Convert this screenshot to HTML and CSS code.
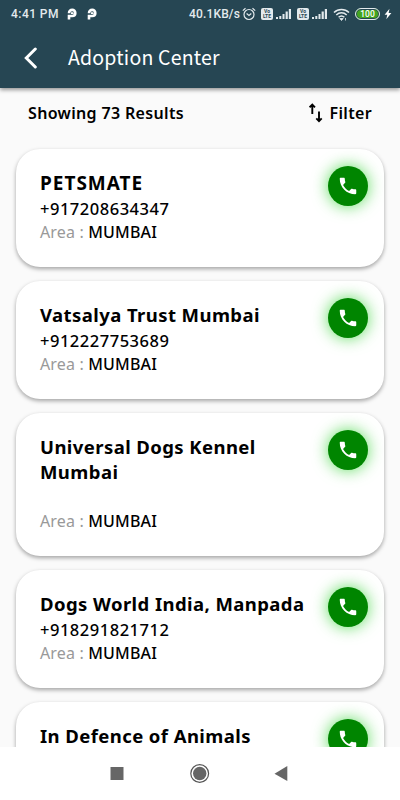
FILE: index.html
```html
<!DOCTYPE html>
<html lang="en">
  <head>
    <meta charset="utf-8" />
    <meta name="viewport" content="width=device-width, initial-scale=1" />
    <title>Adoption Center</title>
    <link rel="stylesheet" href="styles.css">
  </head>
  <body>
    <svg class="sprite" width="0" height="0">
      <symbol id="phone" viewBox="0 0 24 24">
        <path d="M6.620 10.790c1.440 2.830 3.760 5.140 6.590 6.590l2.200-2.200c.27-.27.67-.36 1.020-.24 1.120.37 2.330.57 3.570.57.55 0 1 .45 1 1V20c0 .55-.45 1-1 1-9.390 0-17-7.610-17-17 0-.55.45-1 1-1h3.500c.55 0 1 .45 1 1 0 1.250.2 2.450.57 3.570.11.35.03.74-.25 1.020z" fill="#fff" />
      </symbol>
      <symbol id="pay" viewBox="0 0 10 12">
        <path d="M2 11.600V8H5.200C7 8 8.300 6.700 8.300 4.900S7 1.900 5.200 1.900 2 3 2 5.200M5.200 4.200V6" fill="none" stroke="#fff" stroke-width="2.600" />
      </symbol>
      <symbol id="signal" viewBox="0 0 16 12">
        <path d="M0 11h2V9H0zM3.300 11h2V8h-2zM6.500 11h2V6h-2zM9.600 11h2.200V3.500H9.600zM12.800 11h2.200V1h-2.200z" fill="#e3eaed" />
      </symbol>
    </svg>

    <header class="header">
      <div class="status">
        <span class="time">4:41 PM</span>
        <svg class="pay" width="10" height="12"><use href="#pay" /></svg>
        <svg class="pay" width="10" height="12"><use href="#pay" /></svg>
        <span class="speed">40.1KB/s</span>
        <svg class="alarm" width="14" height="14" viewBox="0 0 14 14" fill="none" stroke="#e3eaed" stroke-width="1.2">
          <circle cx="7" cy="7.500" r="5" />
          <path d="M.8 3.600 3.500 1.200M13.200 3.600 10.500 1.200M4.600 6.500 7 8.500l2.300-2" />
        </svg>
        <span class="volte"><span>Vo</span><span>LTE</span></span>
        <svg class="signal" width="16" height="12"><use href="#signal" /></svg>
        <span class="volte"><span>Vo</span><span>LTE</span></span>
        <svg class="signal" width="16" height="12"><use href="#signal" /></svg>
        <svg class="wifi" width="17" height="13" viewBox="0 0 17 13" fill="none" stroke="#e3eaed" stroke-width="1.500">
          <path d="M1 4.500C5.200.4 11.800.4 16 4.500M3.300 7c3-2.900 7.400-2.900 10.400 0M5.600 9.300c1.700-1.600 4.100-1.600 5.800 0" />
          <path d="M6.800 10.500h3.400l-1.700 2zM12.500 10v2.500" stroke-width=".8" fill="#e3eaed" />
        </svg>
        <span class="battery">100</span>
        <svg class="bolt" width="8" height="12" viewBox="0 0 8 12"><path d="M5.500.8.600 6.800h2.700L2.300 11.300 7.400 5H4.600z" fill="#fff" /></svg>
      </div>
      <div class="titlebar">
        <svg class="back" width="16" height="24" viewBox="0 0 16 24"><path d="M14.300 3 5.300 12l9 9" fill="none" stroke="#fff" stroke-width="3" stroke-linecap="round" /></svg>
        <h1>Adoption Center</h1>
      </div>
    </header>

    <main class="content">
      <div class="toolbar">
        <span class="count">Showing 73 Results</span>
        <div class="filter">
          <svg width="14" height="20" viewBox="0 0 14 20" fill="none" stroke="#000" stroke-width="1.900">
            <path d="M3.300 11V2M.6 4.300 3.300 1.600 6 4.300M10 8.500v9M7.300 15.400l2.700 2.700 2.700-2.700" />
          </svg>
          <span>Filter</span>
        </div>
      </div>

      <div class="list">
        <div class="card">
          <div class="info">
            <h2 class="caps">PETSMATE</h2>
            <p class="number">+917208634347</p>
            <p class="area">Area : <b>MUMBAI</b></p>
          </div>
          <div class="call"><svg width="22" height="22"><use href="#phone" /></svg></div>
        </div>
        <div class="card">
          <div class="info">
            <h2>Vatsalya Trust Mumbai</h2>
            <p class="number">+912227753689</p>
            <p class="area">Area : <b>MUMBAI</b></p>
          </div>
          <div class="call"><svg width="22" height="22"><use href="#phone" /></svg></div>
        </div>
        <div class="card tall">
          <div class="info">
            <h2>Universal Dogs Kennel Mumbai</h2>
            <p class="number"></p>
            <p class="area">Area : <b>MUMBAI</b></p>
          </div>
          <div class="call"><svg width="22" height="22"><use href="#phone" /></svg></div>
        </div>
        <div class="card">
          <div class="info">
            <h2>Dogs World India, Manpada</h2>
            <p class="number">+918291821712</p>
            <p class="area">Area : <b>MUMBAI</b></p>
          </div>
          <div class="call"><svg width="22" height="22"><use href="#phone" /></svg></div>
        </div>
        <div class="card">
          <div class="info">
            <h2>In Defence of Animals</h2>
          </div>
          <div class="call"><svg width="22" height="22"><use href="#phone" /></svg></div>
        </div>
      </div>
    </main>

    <nav class="navbar">
      <svg width="400" height="53" viewBox="0 0 400 53" fill="#666">
        <path d="M110.500 20h13v13h-13z" />
        <circle cx="199.700" cy="26.500" r="8.900" fill="none" stroke="#555" stroke-width="1.200" />
        <circle cx="199.700" cy="26.500" r="6.700" />
        <path d="M274.500 26.700 287.300 19v15z" />
      </svg>
    </nav>
  </body>
</html>
```
FILE: styles.css
```css
* {
  box-sizing: border-box;
}

body {
  margin: 0;
  width: 400px;
  height: 800px;
  display: flex;
  flex-direction: column;
  overflow: hidden;
  background: #fafafa;
  color: #000;
  font-family: "Noto Sans", sans-serif;
}

h1,
h2,
p {
  margin: 0;
}

svg {
  display: block;
  flex: none;
}

.sprite {
  position: absolute;
}

.header {
  flex: none;
  height: 88px;
  background: #264653;
  color: #fff;
  box-shadow: 0 2px 4px rgba(0, 0, 0, 0.4);
  z-index: 1;
}

.status {
  height: 28px;
  display: flex;
  align-items: center;
  padding-left: 11px;
  font: 500 12px/28px Roboto, sans-serif;
  color: #e3eaed;
}

.time {
  width: 48px;
  white-space: nowrap;
  letter-spacing: 0.45px;
}

.pay {
  margin-left: 8px;
  margin-right: 2px;
}

.speed {
  margin-left: 90px;
  width: 51px;
  white-space: nowrap;
  letter-spacing: 0.15px;
}

.alarm {
  margin-left: 2px;
}

.volte {
  width: 12px;
  height: 12px;
  margin-left: 5px;
  padding-top: 1px;
  border-radius: 2px;
  background: #e3eaed;
  color: #264653;
  font: bold 5px/5px Roboto, sans-serif;
  text-align: center;
}

.volte span {
  display: block;
}

.signal {
  margin-left: 3px;
}

.wifi {
  margin-left: 5px;
}

.battery {
  width: 25px;
  height: 12px;
  margin-left: 5px;
  border: 1px solid #e3eaed;
  border-radius: 6px;
  background: #43a51e;
  box-shadow: inset 0 0 0 1px #264653;
  color: #fff;
  font: 500 8.5px/10px Roboto, sans-serif;
  text-align: center;
}

.bolt {
  margin-left: 4px;
}

.titlebar {
  height: 60px;
  display: flex;
  align-items: center;
  padding-left: 21px;
}

.titlebar h1 {
  margin: -2px 0 0 31px;
  font: 400 19.5px/28px "Noto Sans CJK SC", sans-serif;
  letter-spacing: 0.2px;
}

.content {
  flex: 1;
  min-height: 0;
  overflow: hidden;
}

.toolbar {
  height: 61px;
  display: flex;
  justify-content: space-between;
  align-items: flex-start;
  padding: 15px 28px 0 28px;
  font-size: 16px;
  font-weight: 600;
  line-height: 20px;
  letter-spacing: 0.34px;
}

.filter {
  display: flex;
  gap: 6px;
}

.list {
  display: flex;
  flex-direction: column;
  gap: 14.5px;
  padding: 0 16px;
}

.card {
  display: flex;
  align-items: flex-start;
  justify-content: space-between;
  min-height: 117.5px;
  padding: 16.5px 16px 0 24px;
  border-radius: 24px;
  background: #fff;
  box-shadow: 0 2px 4px rgba(0, 0, 0, 0.35);
}

.tall {
  min-height: 142.5px;
}

.info {
  width: 275px;
  padding-top: 5.5px;
}

.info h2 {
  font-size: 18.5px;
  font-weight: 700;
  line-height: 24.5px;
  letter-spacing: 0.42px;
}

.info .caps {
  font-size: 19px;
  letter-spacing: 1px;
}

.number {
  height: 24px;
  font-size: 16.5px;
  font-weight: 500;
  line-height: 25px;
  letter-spacing: 0.52px;
}

.number:empty {
  height: 25px;
}

.area {
  font-size: 16px;
  line-height: 24px;
  letter-spacing: 0.15px;
  color: #999;
}

.area b {
  font-weight: 500;
  letter-spacing: 0.2px;
  color: #000;
}

.call {
  flex: none;
  width: 40px;
  height: 40px;
  display: grid;
  place-items: center;
  border-radius: 50%;
  background: #008500;
  box-shadow: 0 0 16px rgba(0, 200, 0, 0.65);
}

.navbar {
  flex: none;
  height: 53px;
  background: #fff;
  z-index: 1;
}
```
